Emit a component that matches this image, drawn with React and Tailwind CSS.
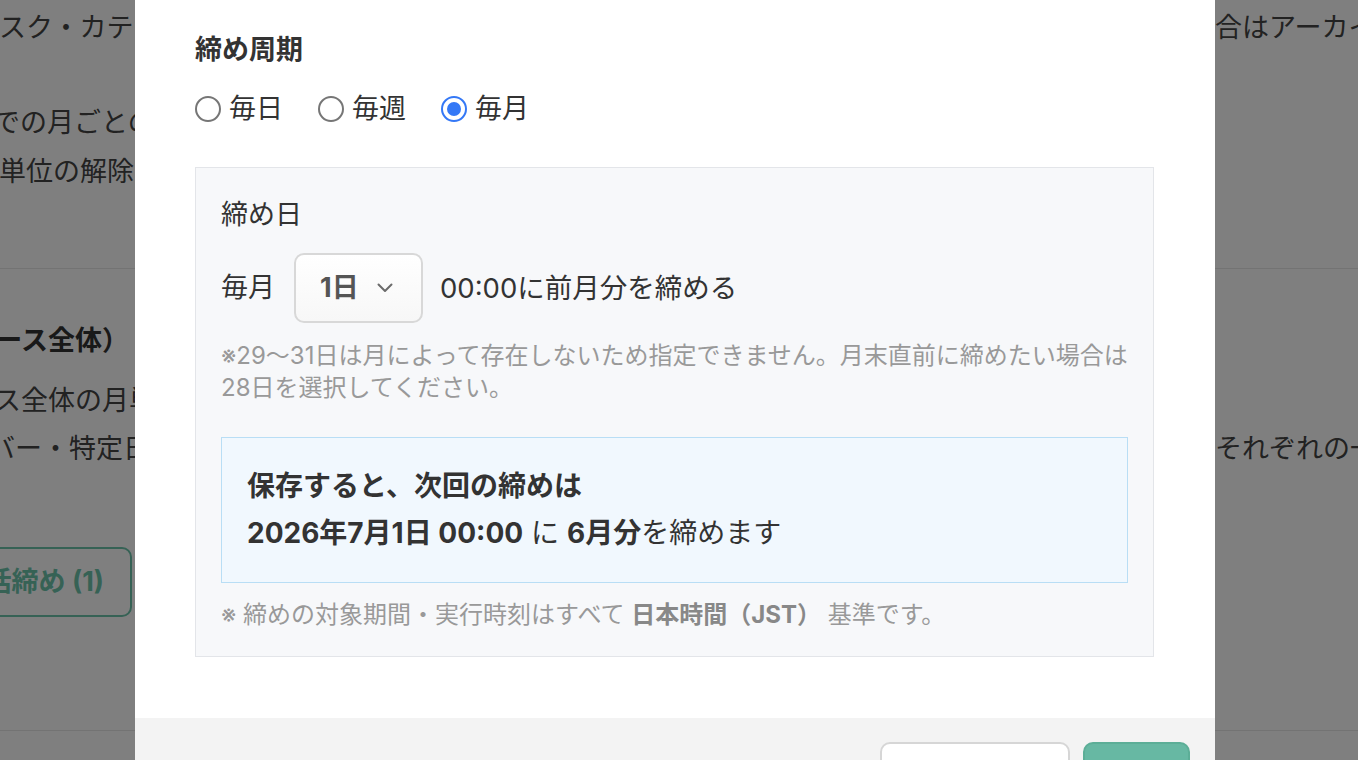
import React from "react";

function Radio({ checked, label }) {
  return (
    <label className="flex items-center gap-[8px]">
      {checked ? (
        <span className="flex h-[26px] w-[26px] items-center justify-center rounded-full border-2 border-[#3478f6] bg-white">
          <span className="h-[14px] w-[14px] rounded-full bg-[#3478f6]" />
        </span>
      ) : (
        <span className="h-[26px] w-[26px] rounded-full border-2 border-[#767676] bg-white" />
      )}
      <span className="text-[27px] leading-[40px] text-[#333]">{label}</span>
    </label>
  );
}

export default function App() {
  return (
    <div className="relative h-[760px] w-[1358px] overflow-hidden bg-white font-['Inter','Noto_Sans_CJK_JP',sans-serif]">
      {/* background page */}
      <div className="flex flex-col text-[27px] leading-[40px] text-[#444]">
        <div className="mt-[8px] flex">
          <div className="w-[1215px] shrink-0 overflow-hidden whitespace-nowrap">
            <span className="ml-[-28px]">タスク・カテゴリーを削除した場合</span>
          </div>
          <div className="whitespace-nowrap">合はアーカイブされます</div>
        </div>
        <div className="mt-[55px] flex">
          <div className="w-[1215px] shrink-0 overflow-hidden whitespace-nowrap">
            <span className="ml-[-34px]">までの月ごとの締め処理を行います</span>
          </div>
        </div>
        <div className="mt-[9px] flex">
          <div className="w-[1215px] shrink-0 overflow-hidden whitespace-nowrap">
            <span className="ml-[-28px]">月単位の解除も可能です</span>
          </div>
        </div>
        <div className="mt-[76px] h-px w-full bg-[#e6e6e6]" />
        <div className="mt-[52px] flex">
          <div className="w-[1215px] shrink-0 overflow-hidden whitespace-nowrap font-bold text-[#333]">
            <span className="ml-[-164px]">（ワークスペース全体）</span>
          </div>
        </div>
        <div className="mt-[20px] flex">
          <div className="w-[1215px] shrink-0 overflow-hidden whitespace-nowrap">
            <span className="ml-[-164px]">ワークスペース全体の月単位の締め</span>
          </div>
        </div>
        <div className="mt-[8px] flex">
          <div className="w-[1215px] shrink-0 overflow-hidden whitespace-nowrap">
            <span className="ml-[-66px]">メンバー・特定日の締め</span>
          </div>
          <div className="whitespace-nowrap">それぞれの一覧</div>
        </div>
        <div className="mt-[78px] flex">
          <div className="ml-[-60px] flex h-[70px] w-[192px] items-center justify-end rounded-[10px] border-2 border-[#6cc4ab] pr-[26px] font-bold text-[#6cc4ab]">
            一括締め (1)
          </div>
        </div>
        <div className="mt-[113px] h-px w-full bg-[#e6e6e6]" />
      </div>

      {/* overlay */}
      <div className="absolute inset-0 bg-black/50" />

      {/* modal */}
      <div className="absolute left-[135px] top-0 flex w-[1080px] flex-col bg-white">
        <div className="px-[60px] pb-[61px] pt-[30px]">
          <h2 className="text-[27px] font-bold leading-[40px] text-[#333]">締め周期</h2>
          <div className="mt-[19px] flex items-center gap-[35px]">
            <Radio label="毎日" />
            <Radio label="毎週" />
            <Radio checked label="毎月" />
          </div>

          <div className="mt-[38px] w-[959px] border border-[#e3e5e9] bg-[#f7f8fa] px-[25px] pb-[25px] pt-[27px]">
            <div className="text-[27px] leading-[40px] text-[#333]">締め日</div>
            <div className="mt-[18px] flex items-center text-[27px] leading-[40px] text-[#333]">
              <span>毎月</span>
              <div className="ml-[19px] flex h-[70px] w-[129px] items-center rounded-[10px] border-2 border-[#d8d8d8] bg-gradient-to-b from-white to-[#f7f7f7] pl-[24px]">
                <span className="font-bold text-[#555]">1日</span>
                <svg className="ml-[18px]" width="16" height="10" viewBox="0 0 16 10" fill="none">
                  <polyline points="1.5,1.5 8,8 14.5,1.5" stroke="#6b6b6b" strokeWidth="2" strokeLinecap="round" strokeLinejoin="round" />
                </svg>
              </div>
              <span className="ml-[17px] text-[27.5px]">00:00に前月分を締める</span>
            </div>
            <p className="mt-[17px] text-[24px] leading-[32px] text-[#999]">
              ※29〜31日は月によって存在しないため指定できません。月末直前に締めたい場合は28日を選択してください。
            </p>
            <div className="mt-[33px] border border-[#b9def5] bg-[#f1f8fe] px-[25px] py-[25px] text-[28px] leading-[47px] text-[#333]">
              <div className="font-bold">保存すると、次回の締めは</div>
              <div>
                <span className="font-bold">2026年7月1日 00:00</span> に <span className="font-bold">6月分</span>を締めます
              </div>
            </div>
            <p className="mt-[16px] text-[24px] leading-[32px] text-[#999]">
              ※ 締めの対象期間・実行時刻はすべて <span className="font-bold text-[#888]">日本時間（JST）</span> 基準です。
            </p>
          </div>
        </div>
        <div className="flex justify-end gap-[13px] bg-[#f3f3f3] pb-[24px] pr-[25px] pt-[24px]">
          <button className="h-[70px] w-[190px] rounded-[10px] border-2 border-[#d6d6d6] bg-white text-[27px] text-[#333]">
            キャンセル
          </button>
          <button className="h-[70px] w-[107px] rounded-[10px] border-2 border-[#5cae97] bg-[#67b8a3] text-[27px] font-bold text-white">
            保存
          </button>
        </div>
      </div>
    </div>
  );
}
